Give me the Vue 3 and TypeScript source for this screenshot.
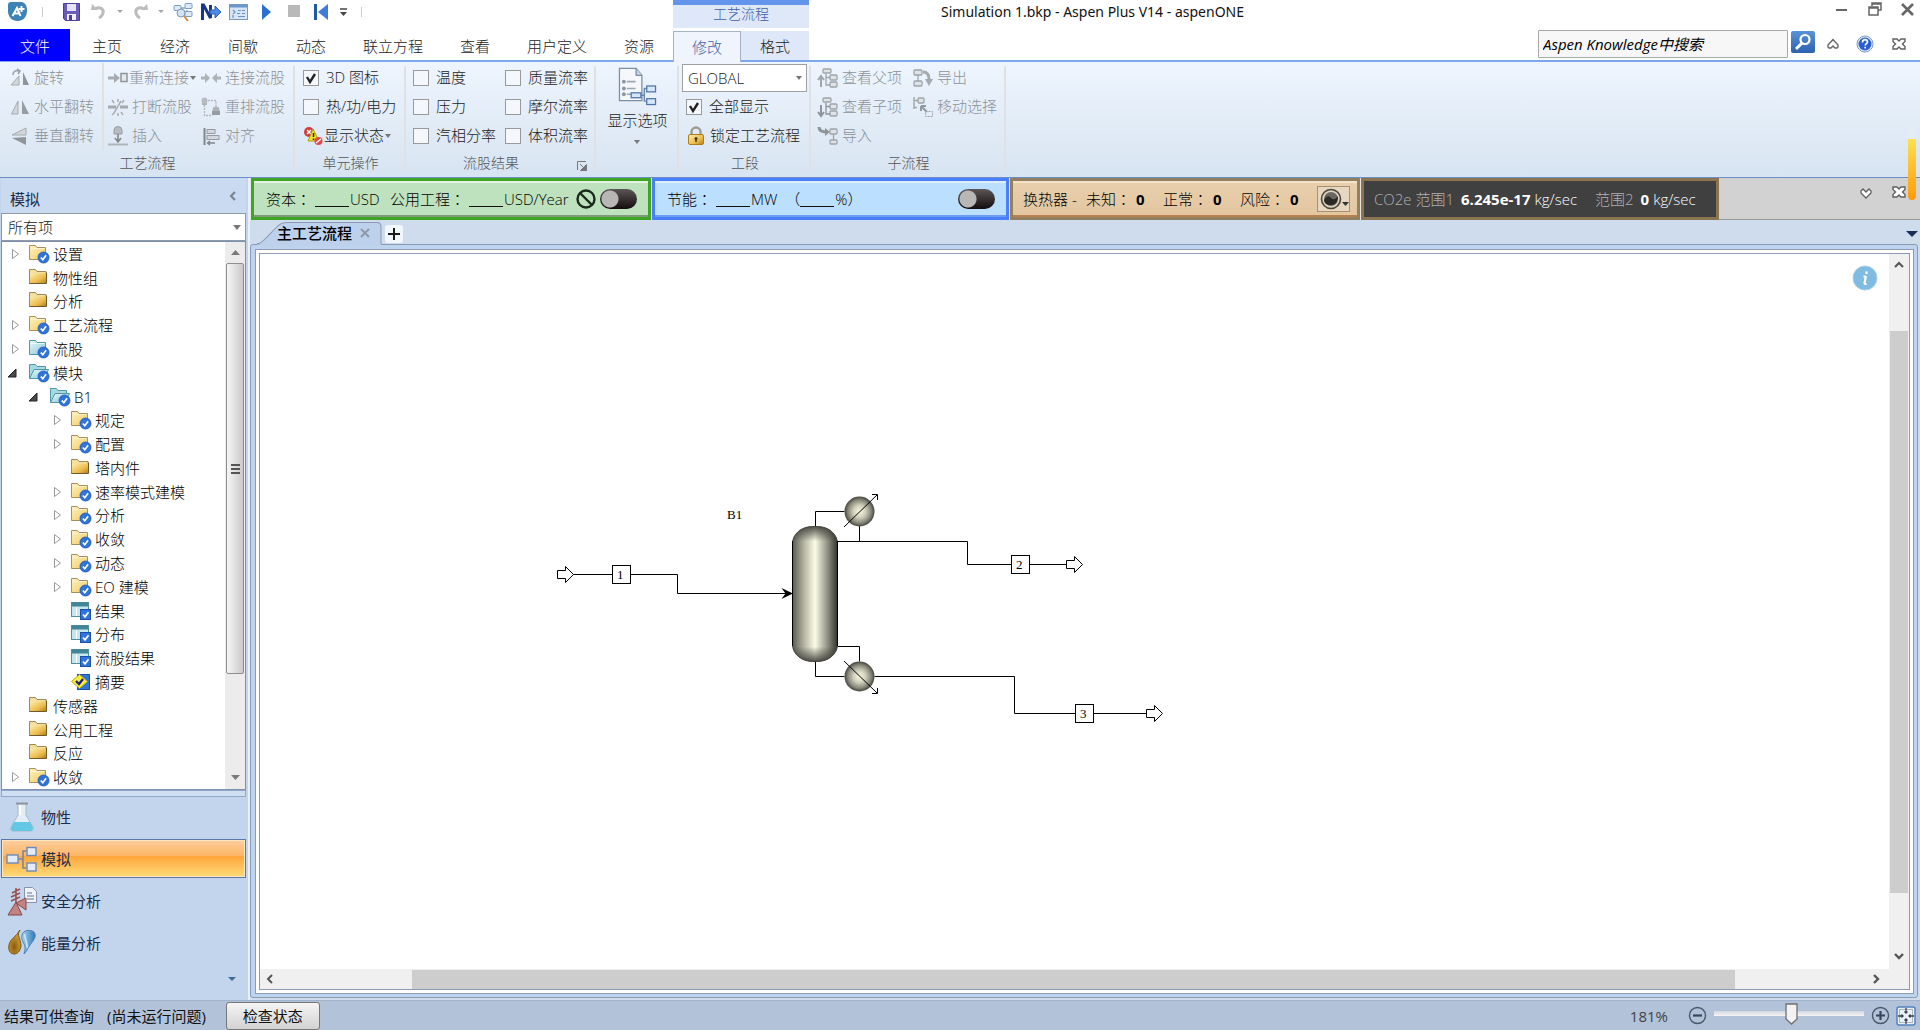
<script setup lang="ts">
import { ref } from 'vue'

interface Cmd { icon: string; label: string; arrow?: boolean; tight?: boolean }
interface Check { label: string; on: boolean }
interface TreeRow { level: number; icon: string; label: string; state: 'open' | 'closed' | 'leaf' }

const box = (x: number, y: number, w = 7, h = 5) =>
  `<rect x="${x}" y="${y}" width="${w}" height="${h}" rx="1" fill="#dfe2e6" stroke="#9ea4aa" stroke-width="1.3"/>`
const badge = '<circle cx="14.500" cy="13.500" r="5.500" fill="#2f74dc" stroke="#1d55b0" stroke-width=".8"/><path d="M11.800 13.500l2 2.200 3.300-4.400" fill="none" stroke="#fff" stroke-width="1.700"/>'
const squareBadge = '<rect x="9.500" y="8.500" width="10" height="10" fill="#2f74dc" stroke="#1c4fa6"/><path d="M12 13.500l2 2.300 3.500-4.600" fill="none" stroke="#fff" stroke-width="1.700"/>'
const folder = '<path d="M.5 3V1.500h6l1.500 2h9v12H.5z" fill="#f3dfa0" stroke="#a08a50"/><path d="M1 5.500h16v10H1z" fill="url(#gFolder)"/><path d="M.5 15.500h17v-11" fill="none" stroke="#6e5a2a"/>'
const folderLight = '<path d="M.5 15.500v-14h6l1.500 2h8.500v12z" fill="url(#gLight)" stroke="#a89060"/><path d="M1.500 4.500h14" stroke="#fdf4cf"/>'
const folderTeal = '<path d="M.5 15.500v-14h6l1.500 2h8.500v12z" fill="url(#gTeal)" stroke="#4f98a8"/><path d="M1.500 4.500h14" stroke="#eafafd"/>'
const folderTealOpen = '<path d="M.5 15.500v-14h6l1.500 2h8.500v3" fill="#a5d9e3" stroke="#4f98a8"/><path d="M.5 15.500l4.500-9h14.500l-4 9z" fill="url(#gTeal)" stroke="#4f98a8"/>'

const icons: Record<string, string> = {
  rotate: '<path d="M1 17l8-9v9z" fill="#d3d7db" stroke="#a5aaaf"/><path d="M13 4l6 13h-6z" fill="#8f959b"/><path d="M3 7c0-4 3-5 6-4M7 1l3 2-2 3" fill="none" stroke="#9da3a8" stroke-width="1.600"/>',
  flipH: '<path d="M1.500 17L8 4v13z" fill="#d3d7db" stroke="#a5aaaf"/><path d="M12 3l7 14h-7z" fill="#979da3"/>',
  flipV: '<path d="M16 2v7H2z" fill="#d3d7db" stroke="#a5aaaf"/><path d="M16 11v8L2 12z" fill="#8f959b"/>',
  reconnect: '<path d="M0 8.500h6V5l6 5-6 5v-3.500H0z" fill="#a9adb2"/><rect x="13" y="5.500" width="6" height="8" fill="#e6e9ec" stroke="#8f959b" stroke-width="1.500"/>',
  join: '<path d="M0 8.500h4V5l5 5-5 5v-3.500H0zM20 8.500h-4V5l-5 5 5 5v-3.500h4z" fill="#aeb3b8"/>',
  breakS: '<path d="M0 10h8M12 10h8" stroke="#a4a9ae" stroke-width="3"/><path d="M13 4L6 16M10 2v3M4 3l2 3M16 3l-2 3M10 16v3M4 18l2-2M15 18l-2-3" stroke="#a9aeb3" stroke-width="1.500" fill="none"/>',
  reroute: '<rect x="1" y="4" width="5" height="4" fill="#aeb3b8"/><circle cx="3.500" cy="3.500" r="3" fill="#b7bcc1"/><path d="M3.500 8v10.500h8M7 3.500h8v6" fill="none" stroke="#b3b8bd" stroke-width="1.400" stroke-dasharray="2 1"/><circle cx="15" cy="13" r="3.500" fill="#aeb3b8"/><rect x="11" y="14" width="8" height="4" fill="#969ca2"/>',
  insert: '<path d="M6 8V4.500a4 4 0 0 1 8 0V8z" fill="#b7bcc1" stroke="#979da3"/><path d="M10 8v7M7 12l3 4 3-4" stroke="#7f868c" stroke-width="1.600" fill="none"/><path d="M0 18.500h20" stroke="#b0b5ba" stroke-width="2"/>',
  align: '<path d="M3.500 2v17" stroke="#7f868c" stroke-width="2"/><rect x="6" y="3.500" width="8" height="4" fill="#d3d7db" stroke="#969ca2"/><rect x="6" y="9.500" width="12" height="4" fill="#d3d7db" stroke="#969ca2"/><path d="M14 17H7M9 15l-2.500 2L9 19" stroke="#7f868c" stroke-width="1.400" fill="none"/>',
  status: '<circle cx="6" cy="6" r="5" fill="#d33a3a"/><path d="M4 4l4 4M8 4L4 8" stroke="#fff" stroke-width="1.500"/><path d="M10 3l6 12H5z" fill="#f4e22a" stroke="#b09a10"/><path d="M10.500 7v4M10.500 12.500v1.500" stroke="#222" stroke-width="1.500"/><circle cx="15.500" cy="15" r="4" fill="#e24a4a"/><path d="M13 17l5-4" stroke="#fff" stroke-width="1.400"/>',
  parent: box(5, 1, 8, 4) + box(12, 7) + box(12, 14) + '<path d="M8 6v11h4M8 9.500h4" fill="none" stroke="#9ea4aa" stroke-width="1.300"/><path d="M3 19V9M0 12l3-4 3 4" fill="none" stroke="#a0a6ac" stroke-width="2"/>',
  child: box(5, 1, 8, 4) + box(12, 7) + box(12, 14) + '<path d="M8 6v11h4M8 9.500h4" fill="none" stroke="#8e949a" stroke-width="1.300"/><path d="M3 8v10M0 15l3 4 3-4" fill="none" stroke="#8e949a" stroke-width="2"/>',
  importH: box(12, 3) + box(12, 14, 7, 4) + '<path d="M15.500 8v6" stroke="#9ea4aa" stroke-width="1.300"/><path d="M1 1c0 4 4 5 8 5" fill="none" stroke="#8e949a" stroke-width="3"/><path d="M7 2l5 4-5 4z" fill="#8e949a"/>',
  exportH: box(1, 2, 8, 5) + box(1, 13, 8, 5) + '<path d="M5 7v6" stroke="#9ea4aa" stroke-width="1.300"/><path d="M10 4c5 0 6 3 6 7" fill="none" stroke="#a4aab0" stroke-width="3"/><path d="M12 11h8l-4 7z" fill="#a4aab0"/>',
  moveSel: box(5, 1, 6, 5) + '<path d="M1 0v12M1 3.500h4M1 10.500h3" fill="none" stroke="#a0a6ac" stroke-width="1.400"/><path d="M8 9h5M8 9v5M8 9l6 6" fill="none" stroke="#9298a0" stroke-width="2"/><rect x="12.500" y="14.500" width="7" height="5" fill="none" stroke="#9ea4aa" stroke-dasharray="2 1"/>',
  lock: '<path d="M5.500 10V6a4.500 4.500 0 0 1 9 0v4" fill="none" stroke="#9c9c94" stroke-width="2.400"/><rect x="2.500" y="8.500" width="15" height="10" rx="1.500" fill="url(#gFolder)" stroke="#b07c1c"/><circle cx="10" cy="12.500" r="1.500" fill="#4a3508"/><path d="M10 13v3" stroke="#4a3508" stroke-width="1.500"/>',
  folder,
  light: folderLight + badge,
  teal: folderTeal + badge,
  tealOpen: folderTealOpen + badge,
  form: '<rect x=".5" y="1.500" width="17" height="14" fill="#c4e6ee" stroke="#4f8f9e"/><path d="M1 3.500h16" stroke="#3f8797" stroke-width="4"/><path d="M5.500 6v9" stroke="#fff"/>' + squareBadge,
  summary: '<rect x="6.500" y="2.500" width="12" height="15" fill="#2f74dc" stroke="#1c4fa6"/><path d="M8.500 2.500l8 7-8 7-8-7z" fill="#f6ee3a" stroke="#b5a81c"/><path d="M5 9l3 3 4-5" fill="none" stroke="#1c1c8c" stroke-width="2.200"/>',
}

const tabs = ['主页', '经济', '间歇', '动态', '联立方程', '查看', '用户定义', '资源']

const flipCmds: Cmd[] = [
  { icon: 'rotate', label: '旋转' }, { icon: 'flipH', label: '水平翻转' }, { icon: 'flipV', label: '垂直翻转' },
]
const linkCmds: Cmd[] = [
  { icon: 'reconnect', label: '重新连接', arrow: true, tight: true }, { icon: 'breakS', label: '打断流股' }, { icon: 'insert', label: '插入' },
]
const streamCmds: Cmd[] = [
  { icon: 'join', label: '连接流股' }, { icon: 'reroute', label: '重排流股' }, { icon: 'align', label: '对齐' },
]
const viewCmds: Cmd[] = [
  { icon: 'parent', label: '查看父项' }, { icon: 'child', label: '查看子项' }, { icon: 'importH', label: '导入' },
]
const moveCmds: Cmd[] = [{ icon: 'exportH', label: '导出' }, { icon: 'moveSel', label: '移动选择' }]

const unitChecks = ref<Check[]>([{ label: '3D 图标', on: true }, { label: '热/功/电力', on: false }])
const resultA = ref<Check[]>([{ label: '温度', on: false }, { label: '压力', on: false }, { label: '汽相分率', on: false }])
const resultB = ref<Check[]>([{ label: '质量流率', on: false }, { label: '摩尔流率', on: false }, { label: '体积流率', on: false }])
const showAll = ref(true)
const zoom = ref(52)
const search = ref('Aspen Knowledge中搜索')

const tree: TreeRow[] = [
  { level: 0, icon: 'light', label: '设置', state: 'closed' },
  { level: 0, icon: 'folder', label: '物性组', state: 'leaf' },
  { level: 0, icon: 'folder', label: '分析', state: 'leaf' },
  { level: 0, icon: 'light', label: '工艺流程', state: 'closed' },
  { level: 0, icon: 'teal', label: '流股', state: 'closed' },
  { level: 0, icon: 'tealOpen', label: '模块', state: 'open' },
  { level: 1, icon: 'tealOpen', label: 'B1', state: 'open' },
  { level: 2, icon: 'light', label: '规定', state: 'closed' },
  { level: 2, icon: 'light', label: '配置', state: 'closed' },
  { level: 2, icon: 'folder', label: '塔内件', state: 'leaf' },
  { level: 2, icon: 'light', label: '速率模式建模', state: 'closed' },
  { level: 2, icon: 'light', label: '分析', state: 'closed' },
  { level: 2, icon: 'light', label: '收敛', state: 'closed' },
  { level: 2, icon: 'light', label: '动态', state: 'closed' },
  { level: 2, icon: 'light', label: 'EO 建模', state: 'closed' },
  { level: 2, icon: 'form', label: '结果', state: 'leaf' },
  { level: 2, icon: 'form', label: '分布', state: 'leaf' },
  { level: 2, icon: 'form', label: '流股结果', state: 'leaf' },
  { level: 2, icon: 'summary', label: '摘要', state: 'leaf' },
  { level: 0, icon: 'folder', label: '传感器', state: 'leaf' },
  { level: 0, icon: 'folder', label: '公用工程', state: 'leaf' },
  { level: 0, icon: 'folder', label: '反应', state: 'leaf' },
  { level: 0, icon: 'light', label: '收敛', state: 'closed' },
]
</script>

<template>
  <div class="app">
    <header class="title-bar">
      <div class="quick">
        <svg class="logo" width="21" height="21" viewBox="0 0 21 21"><path d="M1 4c0-2 1-3 3-3h10c4 0 6 4 6 8.500C20 16 16 20 10.500 20S1 16 1 10z" fill="#3d83b5" /><path d="M5.500 15L10 7l3.500 8M7 12.500h5.500" fill="none" stroke="#fff" stroke-width="2" /><path d="M14.500 5v6M11.500 8h6" stroke="#fff" stroke-width="2" /></svg>
        <i class="bar"></i>
        <button class="tool save" aria-label="保存"><svg width="20" height="20" viewBox="0 0 20 20"><path d="M1.500 1.500h16v17h-14l-2-2z" fill="#6a5cb8" stroke="#4d409a" /><rect x="5" y="2" width="9" height="7" fill="#e6e4f4" /><rect x="5" y="12" width="9" height="6" fill="#f2f2fa" /><rect x="7" y="13" width="3" height="5" fill="#4d409a" /></svg></button>
        <button class="tool undo" aria-label="撤消"><svg width="16" height="20" viewBox="0 0 16 20"><path d="M4 7c5-3 9 0 8 4-.5 2-2 4-4 5" fill="none" stroke="#bdbdbd" stroke-width="3" /><path d="M0 8l1-6 6 6z" fill="#bdbdbd" /></svg></button>
        <svg class="mini" width="6" height="4" viewBox="0 0 6 4"><path d="M0 0h6L3 3z" fill="#a8a8a8" /></svg>
        <button class="tool redo" aria-label="恢复"><svg width="16" height="20" viewBox="0 0 16 20"><path d="M12 7C7 4 3 7 4 11c.5 2 2 4 4 5" fill="none" stroke="#bdbdbd" stroke-width="3" /><path d="M16 8l-1-6-6 6z" fill="#bdbdbd" /></svg></button>
        <svg class="mini" width="6" height="4" viewBox="0 0 6 4"><path d="M0 0h6L3 3z" fill="#a8a8a8" /></svg>
        <button class="tool" aria-label="流程"><svg width="20" height="20" viewBox="0 0 20 20"><path d="M6 6h6M14 8v5M7 9l4 5" stroke="#8ba5c2" stroke-width="1.400" /><rect x="1" y="3.500" width="7" height="5" rx="1" fill="#dbe9f8" stroke="#7c9cc0" /><rect x="12" y="1.500" width="7" height="5" rx="1" fill="#dbe9f8" stroke="#7c9cc0" /><rect x="12" y="9.500" width="7" height="5" rx="1" fill="#dbe9f8" stroke="#7c9cc0" /><circle cx="8" cy="11" r="4" fill="#cfe3f5" stroke="#8097ae" /><path d="M11 14l4 5" stroke="#d98a3a" stroke-width="2" /></svg></button>
        <button class="tool next" aria-label="下一步"><svg width="20" height="20" viewBox="0 0 20 20"><path d="M1.500 18V3h1l7 13V3" fill="none" stroke="#16368c" stroke-width="3" /><path d="M9 8h5V4l6 6-6 6v-4H9z" fill="#4f8be0" stroke="#2a5eb8" /></svg></button>
        <button class="tool next" aria-label="控制面板"><svg width="20" height="20" viewBox="0 0 20 20"><rect x=".5" y="2.500" width="18" height="15" fill="#d7e6f6" stroke="#7f98b8" /><path d="M1 4h17" stroke="#6b97cf" stroke-width="3" /><path d="M4 8l2 2-2 2M4 13v3M9 8.500h3M13 8.500h3M8 11.500h3M13 11.500h3M9 14.500h7" stroke="#6d93c4" stroke-width="1.200" fill="none" /></svg></button>
        <button class="tool play" aria-label="运行"><svg width="10" height="16" viewBox="0 0 10 16"><path d="M0 0l9 8-9 8z" fill="#2c6fd2" /></svg></button>
        <button class="tool stop" aria-label="停止"><svg width="13" height="13" viewBox="0 0 13 13"><rect width="12" height="12" fill="#b9b9b9" /></svg></button>
        <button class="tool reset" aria-label="重置"><svg width="15" height="16" viewBox="0 0 15 16"><path d="M1.500 0v16" stroke="#2256a8" stroke-width="3" /><path d="M14 0v16L4 8z" fill="#3f7bd6" /></svg></button>
        <svg width="7" height="8" viewBox="0 0 7 8"><path d="M0 1h7" stroke="#444" stroke-width="1.500" /><path d="M0 4h7L3.500 8z" fill="#444" /></svg>
        <i class="bar"></i>
      </div>
      <div class="context">工艺流程</div>
      <h1>Simulation 1.bkp - Aspen Plus V14 - aspenONE</h1>
      <div class="win">
        <button aria-label="最小化"><svg width="14" height="14" viewBox="0 0 14 14"><path d="M1 8h11" stroke="#666" stroke-width="2" /></svg></button>
        <button aria-label="还原"><svg width="14" height="14" viewBox="0 0 14 14"><path d="M4 4V1h9v7h-3M4 2h9" fill="none" stroke="#666" stroke-width="1.500" /><path d="M1 5h9v8H1zM1 6h9" fill="none" stroke="#666" stroke-width="1.500" /></svg></button>
        <button aria-label="关闭"><svg width="14" height="14" viewBox="0 0 14 14"><path d="M1 2l11 11M12 2L1 13" stroke="#666" stroke-width="2.600" /></svg></button>
      </div>
    </header>

    <nav class="tabs">
      <button class="file">文件</button>
      <button v-for="t in tabs" :key="t" class="tab">{{ t }}</button>
      <button class="tab active">修改</button>
      <button class="tab ctx">格式</button>
      <div class="search">
        <input v-model="search" type="text" aria-label="Aspen Knowledge中搜索" />
        <button class="go" aria-label="搜索"><svg width="18" height="18" viewBox="0 0 18 18"><circle cx="11" cy="6.500" r="4.500" fill="none" stroke="#fff" stroke-width="2.200" /><path d="M8 10l-6 6" stroke="#fff" stroke-width="3" /></svg></button>
        <button class="plain up" aria-label="折叠功能区"><svg width="12" height="11" viewBox="0 0 12 11"><path d="M6 1.500L1 7v2l1 1h2l2-2 2 2h2l1-1V7z" fill="#fff" stroke="#666" stroke-width="1.400" /></svg></button>
        <button class="plain help" aria-label="帮助"><svg width="18" height="18" viewBox="0 0 18 18"><circle cx="9" cy="9" r="8" fill="#e8effa" stroke="#7d9ac6" /><circle cx="9" cy="9" r="6.500" fill="#2b5fd0" /><path d="M6.500 7.500c0-4 5-3.500 5-.5 0 1.600-2.300 1.600-2.300 3.500M9.200 11.800v1.700" fill="none" stroke="#fff" stroke-width="1.600" /></svg></button>
        <button class="plain" aria-label="关闭文档"><svg width="14" height="12" viewBox="0 0 14 12"><path d="M1 1h4l2 2 2-2h4v2.500L10.500 6 13 8.500V11H9L7 9l-2 2H1V8.500L3.500 6 1 3.500z" fill="#fff" stroke="#606060" stroke-width="1.400" /></svg></button>
      </div>
    </nav>

    <section class="ribbon">
      <div class="group g-flow">
        <div class="cols">
          <div class="col flip">
            <button v-for="c in flipCmds" :key="c.label" class="cmd" disabled><svg width="20" height="20" viewBox="0 0 20 20" v-html="icons[c.icon]"></svg>{{ c.label }}</button>
          </div>
          <div class="col link">
            <button v-for="c in linkCmds" :key="c.label" class="cmd" :class="{ tight: c.tight }" disabled><svg width="20" height="20" viewBox="0 0 20 20" v-html="icons[c.icon]"></svg>{{ c.label }}<i v-if="c.arrow" class="caret"></i></button>
          </div>
          <div class="col">
            <button v-for="c in streamCmds" :key="c.label" class="cmd" disabled><svg width="20" height="20" viewBox="0 0 20 20" v-html="icons[c.icon]"></svg>{{ c.label }}</button>
          </div>
        </div>
        <div class="caption">工艺流程</div>
      </div>

      <div class="group g-unit">
        <div class="cols">
          <div class="col">
            <label v-for="c in unitChecks" :key="c.label" class="check"><input v-model="c.on" type="checkbox" />{{ c.label }}</label>
            <button class="cmd tight on"><svg width="20" height="20" viewBox="0 0 20 20" v-html="icons.status"></svg>显示状态<i class="caret"></i></button>
          </div>
        </div>
        <div class="caption">单元操作</div>
      </div>

      <div class="group g-result">
        <div class="cols">
          <div class="col first">
            <label v-for="c in resultA" :key="c.label" class="check"><input v-model="c.on" type="checkbox" />{{ c.label }}</label>
          </div>
          <div class="col">
            <label v-for="c in resultB" :key="c.label" class="check"><input v-model="c.on" type="checkbox" />{{ c.label }}</label>
          </div>
        </div>
        <div class="caption with-launch">流股结果<button class="launch" aria-label="流股结果选项"><svg width="10" height="10" viewBox="0 0 10 10"><path d="M.5 9V.5H9" fill="none" stroke="#777" /><path d="M3 3l5 5M9.500 3.500v6h-6z" fill="#777" stroke="#777" /></svg></button></div>
      </div>

      <div class="group g-opts">
        <button class="big">
          <svg width="39" height="39" viewBox="0 0 40 40"><path d="M1.500 1.500h17l6 7v26h-23z" fill="#f4f8fd" stroke="#7d8fa6" stroke-width="1.300" /><path d="M18.500 1.500v7h6" fill="#c6d6ea" stroke="#5d7088" /><path d="M9 15h9M9 22h9M9 28h5" stroke="#9aa6b5" stroke-width="1.600" /><circle cx="6" cy="15" r="2" fill="#8c97a6" /><circle cx="6" cy="22" r="2" fill="#8c97a6" /><circle cx="6" cy="28" r="2" fill="#8c97a6" /><path d="M23 29h4v-7h3M27 29v6h3" fill="none" stroke="#7088a8" stroke-width="1.500" /><rect x="13.500" y="26.500" width="10" height="5" fill="#d7e7fb" stroke="#4f74ad" stroke-width="1.300" /><rect x="29.500" y="19.500" width="9" height="6" fill="#d7e7fb" stroke="#4f74ad" stroke-width="1.300" /><rect x="29.500" y="32.500" width="9" height="6" fill="#d7e7fb" stroke="#4f74ad" stroke-width="1.300" /></svg>
          <span>显示选项</span>
          <i class="caret"></i>
        </button>
      </div>

      <div class="group g-sect">
        <div class="cols">
          <div class="col">
            <div class="combo"><select aria-label="工段"><option>GLOBAL</option></select><i class="caret"></i></div>
            <label class="check"><input v-model="showAll" type="checkbox" />全部显示</label>
            <button class="cmd on"><svg width="20" height="20" viewBox="0 0 20 20" v-html="icons.lock"></svg>锁定工艺流程</button>
          </div>
        </div>
        <div class="caption">工段</div>
      </div>

      <div class="group g-sub">
        <div class="cols">
          <div class="col view">
            <button v-for="c in viewCmds" :key="c.label" class="cmd" disabled><svg width="20" height="20" viewBox="0 0 20 20" v-html="icons[c.icon]"></svg>{{ c.label }}</button>
          </div>
          <div class="col">
            <button v-for="c in moveCmds" :key="c.label" class="cmd" disabled><svg width="20" height="20" viewBox="0 0 20 20" v-html="icons[c.icon]"></svg>{{ c.label }}</button>
          </div>
        </div>
        <div class="caption">子流程</div>
      </div>
      <i class="meter"></i>
    </section>

    <main class="body">
      <aside class="side">
        <div class="side-head"><span>模拟</span><button class="plain" aria-label="折叠"><svg width="7" height="10" viewBox="0 0 7 10"><path d="M6 1L2 5l4 4" fill="none" stroke="#7c8490" stroke-width="2.200" /></svg></button></div>
        <div class="filter"><select aria-label="筛选"><option>所有项</option></select><i class="caret"></i></div>
        <div class="tree-box">
          <ul class="tree">
            <li v-for="(r, i) in tree" :key="i" :class="'l' + r.level">
              <svg class="exp" width="20" height="12" viewBox="0 0 20 12">
                <path v-if="r.state === 'closed'" d="M3.500 1.500v9L9.500 6z" fill="#fff" stroke="#9a9a9a" />
                <path v-if="r.state === 'open'" d="M7 2v8h-8z" fill="#4a4a4a" stroke="#222" />
              </svg>
              <svg width="20" height="20" viewBox="0 0 20 20" v-html="icons[r.icon]"></svg>
              <span>{{ r.label }}</span>
            </li>
          </ul>
          <div class="side-scroll">
            <svg width="9" height="5" viewBox="0 0 9 5"><path d="M0 5h9L4.500 0z" fill="#7a7a7a" /></svg>
            <div class="side-thumb"><i></i><i></i><i></i></div>
            <svg class="down" width="9" height="5" viewBox="0 0 9 5"><path d="M0 0h9L4.500 5z" fill="#7a7a7a" /></svg>
          </div>
        </div>
        <div class="split"></div>
        <nav class="modes">
          <button>
            <svg width="32" height="32" viewBox="0 0 32 32"><path d="M12 3v11L5 26c-1 2 0 4 2 4h18c2 0 3-2 2-4l-7-12V3z" fill="#e3edf6" stroke="#a9b9cb" /><path d="M8 21h16l3 6c0 2-1 3-2 3H7c-2 0-2-2-2-3z" fill="#62c8e4" /><path d="M10 2.500h12" stroke="#8c97a3" stroke-width="2" /><path d="M14 4v10" stroke="#fff" stroke-width="2" /></svg>物性
          </button>
          <button class="current">
            <svg width="32" height="32" viewBox="0 0 32 32"><path d="M12 16h5M20 8h-3v17h3" fill="none" stroke="#7d8894" stroke-width="1.600" /><rect x="1" y="12" width="11" height="8" fill="#e3ecfa" stroke="#6e89b8" stroke-width="1.400" /><rect x="21" y="4.500" width="9" height="8" fill="#e3ecfa" stroke="#6e89b8" stroke-width="1.400" /><rect x="21" y="20" width="9" height="8" fill="#e3ecfa" stroke="#6e89b8" stroke-width="1.400" /></svg>模拟
          </button>
          <button>
            <svg width="32" height="32" viewBox="0 0 32 32"><path d="M18.500 2.500h8l4 4v11h-12z" fill="#eef3f9" stroke="#8594a8" /><path d="M21 8h5M21 11h7M21 14h7" stroke="#8da0b8" stroke-width="1.300" /><path d="M10 17L2 30h14zM10 18l10-5v12z" fill="#c48282" stroke="#8a4747" /><path d="M10 18V3M6 8l8-4M5 12l9-4M5 16l9-4" stroke="#9a5050" stroke-width="1.600" /></svg>安全分析
          </button>
          <button>
            <svg width="32" height="32" viewBox="0 0 32 32"><path d="M14 3c-4 5 1 9 1 16-1 6-4 8-7 8-4 0-6-4-5-9C4 12 10 10 14 3z" fill="url(#gOil)" stroke="#7a5410" /><path d="M16 8c1-5 8-6 12-3 3 4 0 8-4 13-2 3-3 6-6 9 2-7 1-8-1-12-1-2-1.500-4-1-7z" fill="url(#gWater)" stroke="#4883b8" /><path d="M19 7c-1 5 3 8 2 14" fill="none" stroke="#cfe6f8" stroke-width="1.600" /></svg>能量分析
          </button>
          <svg class="more" width="8" height="6" viewBox="0 0 8 6"><path d="M0 1h8L4 5z" fill="#3e6a96" /></svg>
        </nav>
      </aside>

      <section class="work">
        <div class="dash">
          <div class="panel green">
            <span class="a1">资本<i>：</i></span><u></u><span class="a2">USD</span><span class="a3">公用工程<i>：</i></span><u></u><span>USD/Year</span>
            <svg class="ban" width="20" height="20" viewBox="0 0 20 20"><circle cx="10" cy="10" r="8.500" fill="none" stroke="#1b2a1b" stroke-width="2.400" /><path d="M4 4l12 12" stroke="#1b2a1b" stroke-width="2.400" /></svg>
            <input class="toggle" type="checkbox" aria-label="经济分析" />
          </div>
          <div class="panel blue">
            <span class="a1">节能<i>：</i></span><u></u><span>MW</span><span class="b1">（</span><u></u><span>%）</span>
            <input class="toggle end" type="checkbox" aria-label="能量分析" />
          </div>
          <div class="panel tan">
            <span class="c0">换热器 -</span><span>未知<i>：</i></span><b>0</b><span>正常<i>：</i></span><b>0</b><span>风险<i>：</i></span><b>0</b>
            <button class="hx" aria-label="换热器"><svg width="30" height="24" viewBox="0 0 30 24"><circle cx="11" cy="12" r="9.500" fill="#ddd3c2" stroke="#4d4438" stroke-width="1.600" /><circle cx="11" cy="12" r="7" fill="#6a6763" /><path d="M4 13c3-5 5-4 7-2s4 2 7-2c0 6-3 9-7 9s-7-2-7-5z" fill="#2b2926" /><path d="M22 15h7l-3.500 4z" fill="#333" /></svg></button>
          </div>
          <div class="panel dark">
            <em>CO2e 范围1</em><b>6.245e-17</b><span class="d1">kg/sec</span><em>范围2</em><b>0</b><span>kg/sec</span>
          </div>
          <div class="rest">
            <button class="plain" aria-label="展开"><svg width="12" height="11" viewBox="0 0 12 11"><path d="M1 3l2-2 3 3 3-3 2 2v2l-5 5-5-5z" fill="#fff" stroke="#606060" stroke-width="1.300" /></svg></button>
            <button class="plain" aria-label="关闭仪表板"><svg width="14" height="12" viewBox="0 0 14 12"><path d="M1 1h4l2 2 2-2h4v2.500L10.500 6 13 8.500V11H9L7 9l-2 2H1V8.500L3.500 6 1 3.500z" fill="#fff" stroke="#606060" stroke-width="1.400" /></svg></button>
          </div>
        </div>

        <div class="docs">
          <div class="doc">
            <svg class="shape" viewBox="0 0 124 24" preserveAspectRatio="none"><path d="M0 22.500h2C6 22 14 10 20 4.500 23 1.500 25 .5 30 .5h89q4 0 4 4V24H0z" fill="#bed1ec" /><path d="M0 21.500h2C6 21 14 10 20 4.500 23 1.500 25 .5 30 .5h89q4 0 4 4V22" fill="none" stroke="#8b9ab5" /></svg>
            <span>主工艺流程</span>
            <button class="plain" aria-label="关闭标签"><svg width="10" height="10" viewBox="0 0 10 10"><path d="M1 1l8 8M9 1L1 9" stroke="#8d99ab" stroke-width="2" /></svg></button>
          </div>
          <button class="add" aria-label="新建标签"><svg width="14" height="14" viewBox="0 0 14 14"><path d="M7 1v12M1 7h12" stroke="#1a1a1a" stroke-width="2" /></svg></button>
          <svg class="list" width="12" height="6" viewBox="0 0 12 6"><path d="M0 0h12L6 6z" fill="#1b2f55" /></svg>
        </div>

        <div class="frame"><div class="frame-in"><div class="canvas">
          <div class="sheet">
            <svg class="flow" width="1200" height="600" viewBox="260 254 1200 600">
              <defs>
                <linearGradient id="gFolder" x1="0" y1="0" x2="1" y2="1"><stop offset="0" stop-color="#fdeeb0" /><stop offset=".6" stop-color="#edbd4e" /><stop offset="1" stop-color="#b47a18" /></linearGradient>
                <linearGradient id="gLight" x1="0" y1="0" x2="1" y2="1"><stop offset="0" stop-color="#fdf3c4" /><stop offset="1" stop-color="#f3c95c" /></linearGradient>
                <linearGradient id="gTeal" x1="0" y1="0" x2="1" y2="1"><stop offset="0" stop-color="#e6f8fb" /><stop offset="1" stop-color="#86c8d6" /></linearGradient>
                <radialGradient id="gOil" cx=".45" cy=".7" r=".6"><stop offset="0" stop-color="#8a5c0e" /><stop offset="1" stop-color="#d2a238" /></radialGradient>
                <linearGradient id="gWater" x1="0" y1="0" x2="1" y2="0"><stop offset="0" stop-color="#a9d3f2" /><stop offset="1" stop-color="#2f78ba" /></linearGradient>
                <linearGradient id="gBody"><stop offset="0" stop-color="#5b5b52" /><stop offset=".25" stop-color="#b2b2a2" /><stop offset=".5" stop-color="#fcfce6" /><stop offset=".75" stop-color="#9c9c8e" /><stop offset="1" stop-color="#33332e" /></linearGradient>
                <radialGradient id="gBall"><stop offset="0" stop-color="#fafae2" /><stop offset=".4" stop-color="#d0d0bc" /><stop offset=".75" stop-color="#8c8c7e" /><stop offset="1" stop-color="#45453e" /></radialGradient>
                <linearGradient id="gCap" x1="0" y1="0" x2="0" y2="1"><stop offset="0" stop-color="#33332e" stop-opacity=".85" /><stop offset=".11" stop-color="#33332e" stop-opacity="0" /><stop offset=".89" stop-color="#33332e" stop-opacity="0" /><stop offset="1" stop-color="#33332e" stop-opacity=".85" /></linearGradient>
              </defs>
              <g fill="none" stroke="#000" stroke-width="1">
                <path d="M557.500 570.500h8v-4l8 8-8 8v-4h-8z" />
                <path d="M573.500 574.500h39M630.500 574.500h47v19h115" />
                <path d="M815.500 527v-15.500h29M859.500 526v15.500M837.500 541.500h130v23h44M1029.500 564.500h37" />
                <path d="M1066.500 560.500h8v-4l8 8-8 8v-4h-8z" />
                <path d="M837.500 646.500h22v15M815.500 660v16.500h29M874.500 676.500h140v37h61M1093.500 713.500h53" />
                <path d="M1146.500 709.500h8v-4l8 8-8 8v-4h-8z" />
                <rect x="612.500" y="565.500" width="18" height="18" /><rect x="1011.500" y="555.500" width="18" height="18" /><rect x="1075.500" y="704.500" width="18" height="18" />
              </g>
              <path d="M781.500 588l11.500 5.500-11.500 5.500 4-5.500z" fill="#000" />
              <rect x="792.500" y="526.500" width="45" height="135" rx="20" ry="17" fill="url(#gBody)" />
              <rect x="792.500" y="526.500" width="45" height="135" rx="20" ry="17" fill="url(#gCap)" stroke="#45453e" />
              <path d="M792.500 541v105M837.500 541v105" stroke="#000" />
              <circle cx="859.500" cy="511.500" r="15" fill="url(#gBall)" /><circle cx="859.500" cy="676.500" r="15" fill="url(#gBall)" />
              <path d="M844 527l33-32M872 494.500h5.500v5.500M844 661l33 32M872 693.500h5.500V688" fill="none" stroke="#000" />
              <g class="names"><text x="727" y="519">B1</text><text x="617" y="579">1</text><text x="1016" y="569">2</text><text x="1080" y="718">3</text></g>
            </svg>
            <svg class="info" width="26" height="26" viewBox="0 0 26 26"><circle cx="13" cy="13" r="12" fill="#80bce2" stroke="#a6d0ea" /><path d="M14.500 6.500v2.500M14 11l-1.500 7q0 1.500 2 .5M11.500 11.500H14" fill="none" stroke="#fff" stroke-width="2.200" /></svg>
          </div>
          <div class="vs"><svg width="12" height="8" viewBox="0 0 12 8"><path d="M2 7l4-4 4 4" fill="none" stroke="#555" stroke-width="2" /></svg><i></i><svg width="12" height="8" viewBox="0 0 12 8"><path d="M2 1l4 4 4-4" fill="none" stroke="#555" stroke-width="2.400" /></svg></div>
          <div class="hs"><svg width="8" height="12" viewBox="0 0 8 12"><path d="M7 2L3 6l4 4" fill="none" stroke="#555" stroke-width="2" /></svg><i></i><svg width="8" height="12" viewBox="0 0 8 12"><path d="M1 2l4 4-4 4" fill="none" stroke="#555" stroke-width="2.400" /></svg></div>
        </div></div></div>
      </section>
    </main>

    <footer class="status">
      <span class="s1">结果可供查询</span><span>(尚未运行问题)</span>
      <button class="run-state">检查状态</button>
      <output>181%</output>
      <button class="plain" aria-label="缩小"><svg width="19" height="19" viewBox="0 0 19 19"><circle cx="9.500" cy="9.500" r="8" fill="none" stroke="#4a5568" stroke-width="1.400" /><path d="M5 9.500h9" stroke="#3a4558" stroke-width="2.200" /></svg></button>
      <input v-model="zoom" class="zoom" type="range" min="0" max="100" aria-label="缩放" />
      <button class="plain" aria-label="放大"><svg width="19" height="19" viewBox="0 0 19 19"><circle cx="9.500" cy="9.500" r="8" fill="none" stroke="#4a5568" stroke-width="1.400" /><path d="M5 9.500h9M9.500 5v9" stroke="#3a4558" stroke-width="2.200" /></svg></button>
      <button class="plain fit" aria-label="适合窗口"><svg width="20" height="20" viewBox="0 0 20 20"><rect x="1" y="1" width="18" height="18" rx="2" fill="#e9f1fa" stroke="#5582bd" stroke-width="1.500" /><path d="M3.500 3.500h13v13h-13z" fill="none" stroke="#777" stroke-dasharray="1 1" /><path d="M10 2v5M8.500 5.500L10 7l1.500-1.500M10 18v-5M8.500 14.500L10 13l1.500 1.500M2 10h5M5.500 8.500L7 10l-1.500 1.500M18 10h-5M14.500 8.500L13 10l1.500 1.500" fill="none" stroke="#3b3f45" stroke-width="1.300" /></svg></button>
    </footer>
  </div>
</template>

<style>
html, body { margin: 0; height: 100%; }
</style>

<style scoped>
.app { display: flex; flex-direction: column; height: 100vh; min-height: 700px; overflow: hidden; background: #fff; color: #222; font: 300 15px/20px "Open Sans", "Noto Sans CJK SC", sans-serif; }
.app * { box-sizing: border-box; }
button, input, select { font: inherit; color: inherit; margin: 0; }
button { border: 0; padding: 0; background: none; white-space: nowrap; }
svg { flex: none; display: block; overflow: visible; }
.plain { display: flex; }
.caret { flex: none; width: 0; height: 0; border: 3px solid transparent; border-top: 4px solid #777; border-bottom: 0; }

.title-bar { position: relative; flex: none; height: 29px; display: flex; align-items: flex-start; }
.quick { display: flex; align-items: center; height: 23px; padding-left: 7px; }
.quick .bar { width: 1px; height: 10px; background: #ccc; margin: 0 11px 0 14px; }
.tool { display: flex; align-items: center; height: 20px; }
.save { margin: 0 9px 0 8px; }
.undo, .redo { margin-right: 10px; }
.mini { margin-right: 9px; }
.next { margin-left: 8px; }
.play { margin-left: 13px; }
.stop { margin: 0 13px 0 16px; }
.reset { margin-right: 11px; }
.title-bar .context { position: absolute; left: 673px; top: 0; width: 136px; height: 28px; border-top: 5px solid #6495ed; background: #dfe8f9; color: #4060a8; font-size: 14px; line-height: 18px; text-align: center; }
h1 { position: absolute; left: 941px; top: 2px; margin: 0; font: 400 14px/20px "Noto Sans", sans-serif; color: #111; white-space: nowrap; }
.win { display: flex; gap: 19px; margin-left: auto; padding: 2px 5px 0 0; }

.tabs { flex: none; height: 33px; display: flex; border-bottom: 2px solid #7ea6ee; color: #222; }
.tabs > button { height: 32px; line-height: 34px; }
.file { width: 70px; margin-right: 3px; background: #00f; color: #fff; }
.tab { min-width: 68px; padding: 0 18px; }
.tabs .tab.active { height: 31px; margin-top: 2px; line-height: 31px; padding: 0 17px; border: 1px solid #a6b2c6; border-bottom: 0; background: #f0f5fd; color: #4060a8; }
.tabs .tab.ctx { height: 29px; margin-top: 2px; line-height: 31px; background: #dfe8f9; }
.search { margin-left: auto; display: flex; align-items: center; padding: 0 14px 2px 0; }
.search input { width: 250px; height: 28px; padding: 0 4px; border: 1px solid #a8a8a8; border-radius: 1px; background: #f7f7f7; color: #000; font-style: italic; font-weight: 400; }
.go { width: 24px; height: 22px; margin: 0 12px 3px 3px; padding: 2px 3px; border-radius: 2px; background: linear-gradient(#5a93d8, #2c62ae); }
.up { margin-right: 17px; }
.help { margin-right: 18px; }

.ribbon { position: relative; flex: none; height: 116px; display: flex; background: linear-gradient(#eef5fe, #d7e4f1); border-bottom: 1px solid #6b8fc4; }
.group { display: flex; flex-direction: column; padding-top: 1px; background: linear-gradient(#dfe1e4, #dfe1e4) right 4px / 2px 105px no-repeat; background-position: right 4px; }
.cols { display: flex; }
.cmd, .check { display: flex; align-items: center; gap: 4px; height: 29px; line-height: 29px; white-space: nowrap; }
.cmd { color: #8d9298; }
.cmd.on { color: #222; }
.cmd.tight { gap: 1px; }
.caption { position: relative; text-align: center; font-size: 14px; line-height: 26px; color: #555; }
.caption.with-launch { padding-right: 20px; }
.check { gap: 7px; }
.check input { appearance: none; width: 16px; height: 16px; border: 1px solid #999; background: #f4f8fd; }
.check input:checked { background: #f4f8fd url('data:image/svg+xml,<svg xmlns="http://www.w3.org/2000/svg" width="14" height="14"><path d="M3 6l3 5 5-8" fill="none" stroke="%23222" stroke-width="2.400"/></svg>') center no-repeat; }
.g-flow { width: 295px; }
.flip { width: 104px; padding-left: 10px; border-right: 2px solid #dfe1e4; }
.link { width: 97px; padding-left: 4px; }
.g-unit { width: 111px; }
.g-unit .cols { padding-left: 8px; }
.g-result { width: 190px; }
.g-result .cols { padding-left: 7px; }
.first { width: 92px; }
.launch { position: absolute; right: 9px; top: 11px; }
.g-opts { width: 83px; align-items: center; }
.big { display: flex; flex-direction: column; align-items: center; color: #222; padding-top: 4px; }
.big span { line-height: 28px; }
.big .caret { margin-top: 6px; }
.g-sect { width: 132px; }
.g-sect .cols { padding-left: 3px; }
.combo { position: relative; display: flex; align-items: center; height: 29px; }
.combo select { appearance: none; width: 125px; height: 28px; padding: 0 5px; border: 1px solid #a0a0a0; border-radius: 0; background: #fff; }
.combo .caret { position: absolute; right: 5px; }
.g-sect .check, .g-sect .cmd { padding-left: 4px; }
.g-sub { width: 195px; }
.g-sub .cols { padding-left: 7px; }
.view { width: 95px; }
.meter { position: absolute; right: 4px; top: 65px; width: 8px; height: 73px; border-radius: 4px; z-index: 2; background: linear-gradient(#e4ecf5 12px, #fde04e 12px, #ff9a0a 100%); }

.body { flex: 1; min-height: 0; display: flex; background: #cfdcee; }
.side { flex: none; width: 250px; display: flex; flex-direction: column; background: #c3d5ed; padding: 0 2px 0 1px; border-right: 2px solid #e8f0fa; }
.side-head { display: flex; align-items: center; justify-content: space-between; height: 35px; padding: 6px 10px 0 9px; background: #c9daf1; color: #1b2c4c; font-weight: 400; }
.side-head .plain { padding-bottom: 6px; }
.filter { position: relative; display: flex; align-items: center; }
.filter select { appearance: none; width: 100%; height: 28px; padding: 0 6px; border: 1px solid #8f9aa8; border-radius: 0; background: #fff; }
.filter .caret { position: absolute; right: 5px; border-width: 4px; border-top-width: 5px; border-bottom: 0; }
.tree-box { flex: 1; min-height: 0; display: flex; border: 1px solid #7d90ad; background: #fff; color: #000; }
.tree { flex: 1; display: flex; flex-direction: column; margin: 0; padding: 0; list-style: none; }
.tree li { flex: 1; min-height: 0; display: flex; align-items: center; padding-left: 7px; white-space: nowrap; }
.tree li.l1 { padding-left: 28px; }
.tree li.l2 { padding-left: 49px; }
.tree span { padding-left: 4px; }
.side-scroll { width: 20px; display: flex; flex-direction: column; align-items: center; background: #ececec; padding: 8px 1px 9px; }
.side-thumb { flex: 0 1 411px; width: 18px; margin-top: 8px; display: flex; flex-direction: column; align-items: center; justify-content: center; gap: 2px; border: 1px solid #8e8e8e; border-radius: 2px; background: linear-gradient(90deg, #f6f6f6, #c9c9cc); }
.side-thumb i { width: 9px; height: 2px; background: #555; }
.down { margin-top: auto; }
.split { height: 7px; border: 1px solid #8fa8cb; background: #d0def2; }
.modes { position: relative; height: 203px; display: flex; flex-direction: column; gap: 3px; color: #1b2c4c; font-weight: 400; }
.modes button { flex: none; height: 39px; display: flex; align-items: center; gap: 3px; padding-left: 4px; border: 1px solid transparent; }
.modes button.current { border: 1px solid #5a78a8; box-shadow: inset 0 0 0 1px #fbe6c4; background: linear-gradient(#fbcf9e, #fdb667 42%, #fea53c 44%, #fedb79); }
.more { position: absolute; right: 10px; bottom: 18px; }

.work { flex: 1; min-width: 0; display: flex; flex-direction: column; }
.dash { flex: none; height: 42px; display: flex; color: #000; padding-left: 1px; background: #e6e6e6; }
.panel { display: flex; align-items: center; border: 3px solid; white-space: nowrap; padding-left: 12px; margin-right: 1px; }
.panel i { font-style: normal; font-family: "Noto Sans CJK TC", sans-serif; }
.panel u { width: 34px; height: 16px; border-bottom: 1px solid #111; margin-right: 1px; }
.green { width: 400px; border-color: #3fa623; background: #bde2bd; box-shadow: inset 0 2px #e2f3e0, inset 0 -2px #7f9a7c; }
.green .a2 { width: 40px; }
.a1 { width: 49px; }
.a3 { width: 79px; }
.ban { margin-left: auto; }
.toggle { appearance: none; flex: none; width: 37px; height: 20px; border-radius: 10px; margin: 0 11px 0 4px; background: radial-gradient(circle at 10px 10px, #b9b6b6 8px, transparent 9px), linear-gradient(#5c5656, #120c0e); }
.toggle.end { margin: 0 11px 0 auto; }
.blue { width: 357px; border-color: #4a7ffb; background: #bbdfff; box-shadow: inset 0 2px #dceeff, inset 0 -2px #6c9cf0; }
.b1 { width: 21px; text-align: right; margin-left: 2px; }
.tan { width: 350px; border-color: #92805e; background: linear-gradient(#e9cfac, #e2c6a0); box-shadow: inset 0 2px #f3e2cc, inset 0 -2px #b98150; padding-left: 10px; }
.tan .c0 { width: 63px; }
.tan span { width: 50px; }
.tan b { width: 27px; }
.tan b, .dark b { font-weight: 700; }
.hx { width: 33px; height: 26px; padding: 0 0 0 2px; border: 1px solid #a89070; background: #e6d8c0; }
.dark { width: 358px; margin-right: 0; padding-left: 10px; border-color: #8c7450; background: #404040; color: #fff; }
.dark em { font-style: normal; color: #b0b0b0; margin-right: 7px; }
.dark b { color: #fff; margin-right: 4px; }
.d1 { margin-right: 18px; }
.rest { flex: 1; display: flex; justify-content: flex-end; align-items: flex-start; gap: 20px; padding: 8px 14px 0 0; background: #d2d2d2; border-bottom: 1px solid #999; }
.rest .plain:first-child { padding-top: 2px; }
.docs { flex: none; height: 24px; display: flex; align-items: center; padding: 3px 2px 0 7px; }
.doc { position: relative; width: 125px; height: 24px; display: flex; align-items: center; gap: 8px; padding: 0 0 2px 20px; color: #000; z-index: 1; }
.doc span { position: relative; font-weight: 500; line-height: 22px; white-space: nowrap; }
.doc .plain { position: relative; }
.shape { position: absolute; inset: 0; width: 100%; height: 24px; }
.add { display: flex; align-items: center; justify-content: center; width: 18px; height: 18px; margin-left: 3px; border-radius: 3px; background: #f2f7fd; }
.list { margin-left: auto; }
.frame { flex: 1; min-height: 0; display: flex; margin: 0 2px 2px 0; border: 1px solid #8b9ab5; border-radius: 3px; background: #bed4ee; padding: 4px 3px 3px 4px; }
.frame-in { flex: 1; display: flex; border: 1px solid #8b9ab5; background: #fff; padding: 3px; }
.canvas { flex: 1; min-width: 0; display: grid; grid-template: minmax(0, 1fr) 20px / minmax(0, 1fr) 20px; border: 1px solid #8b9ab5; background: #f0f0f0; }
.sheet { position: relative; background: #fff; overflow: hidden; }
.flow { position: absolute; left: 0; top: 0; }
.names { font: 400 13px "Liberation Serif", serif; fill: #000; }
.info { position: absolute; right: 11px; top: 11px; }
.vs { display: flex; flex-direction: column; align-items: center; padding: 6px 1px 8px; }
.vs i { width: 100%; flex: 0 1 562px; margin: 63px 0 auto; background: #cdcdcd; }
.hs { display: flex; align-items: center; padding: 0 8px 0 5px; }
.hs i { height: 19px; flex: 0 1 1323px; margin: 0 auto 0 139px; background: #cdcdcd; }

.status { flex: none; height: 30px; display: flex; align-items: center; padding: 0 4px 0 4px; background: #b1c2d9; border-top: 1px solid #a0b2cc; color: #111; font-weight: 400; white-space: nowrap; }
.s1 { margin-right: 13px; }
.run-state { width: 94px; height: 28px; margin-left: 20px; border: 1px solid #777; border-radius: 3px; background: linear-gradient(#f5f5f5, #d2d2d2); }
output { margin-left: auto; margin-right: 20px; color: #444; }
.zoom { appearance: none; width: 150px; height: 24px; margin: 0 7px 4px; background: linear-gradient(#d2d8e0, #f4f4f4) center / 100% 5px no-repeat; }
.zoom::-webkit-slider-thumb { appearance: none; width: 13px; height: 22px; background: url('data:image/svg+xml,<svg xmlns="http://www.w3.org/2000/svg" width="13" height="22"><path d="M1 1h11v15l-5.500 5L1 16z" fill="%23f2f2f2" stroke="%23707070" stroke-width="1.300"/></svg>') no-repeat; }
.fit { margin-left: 6px; }
</style>
